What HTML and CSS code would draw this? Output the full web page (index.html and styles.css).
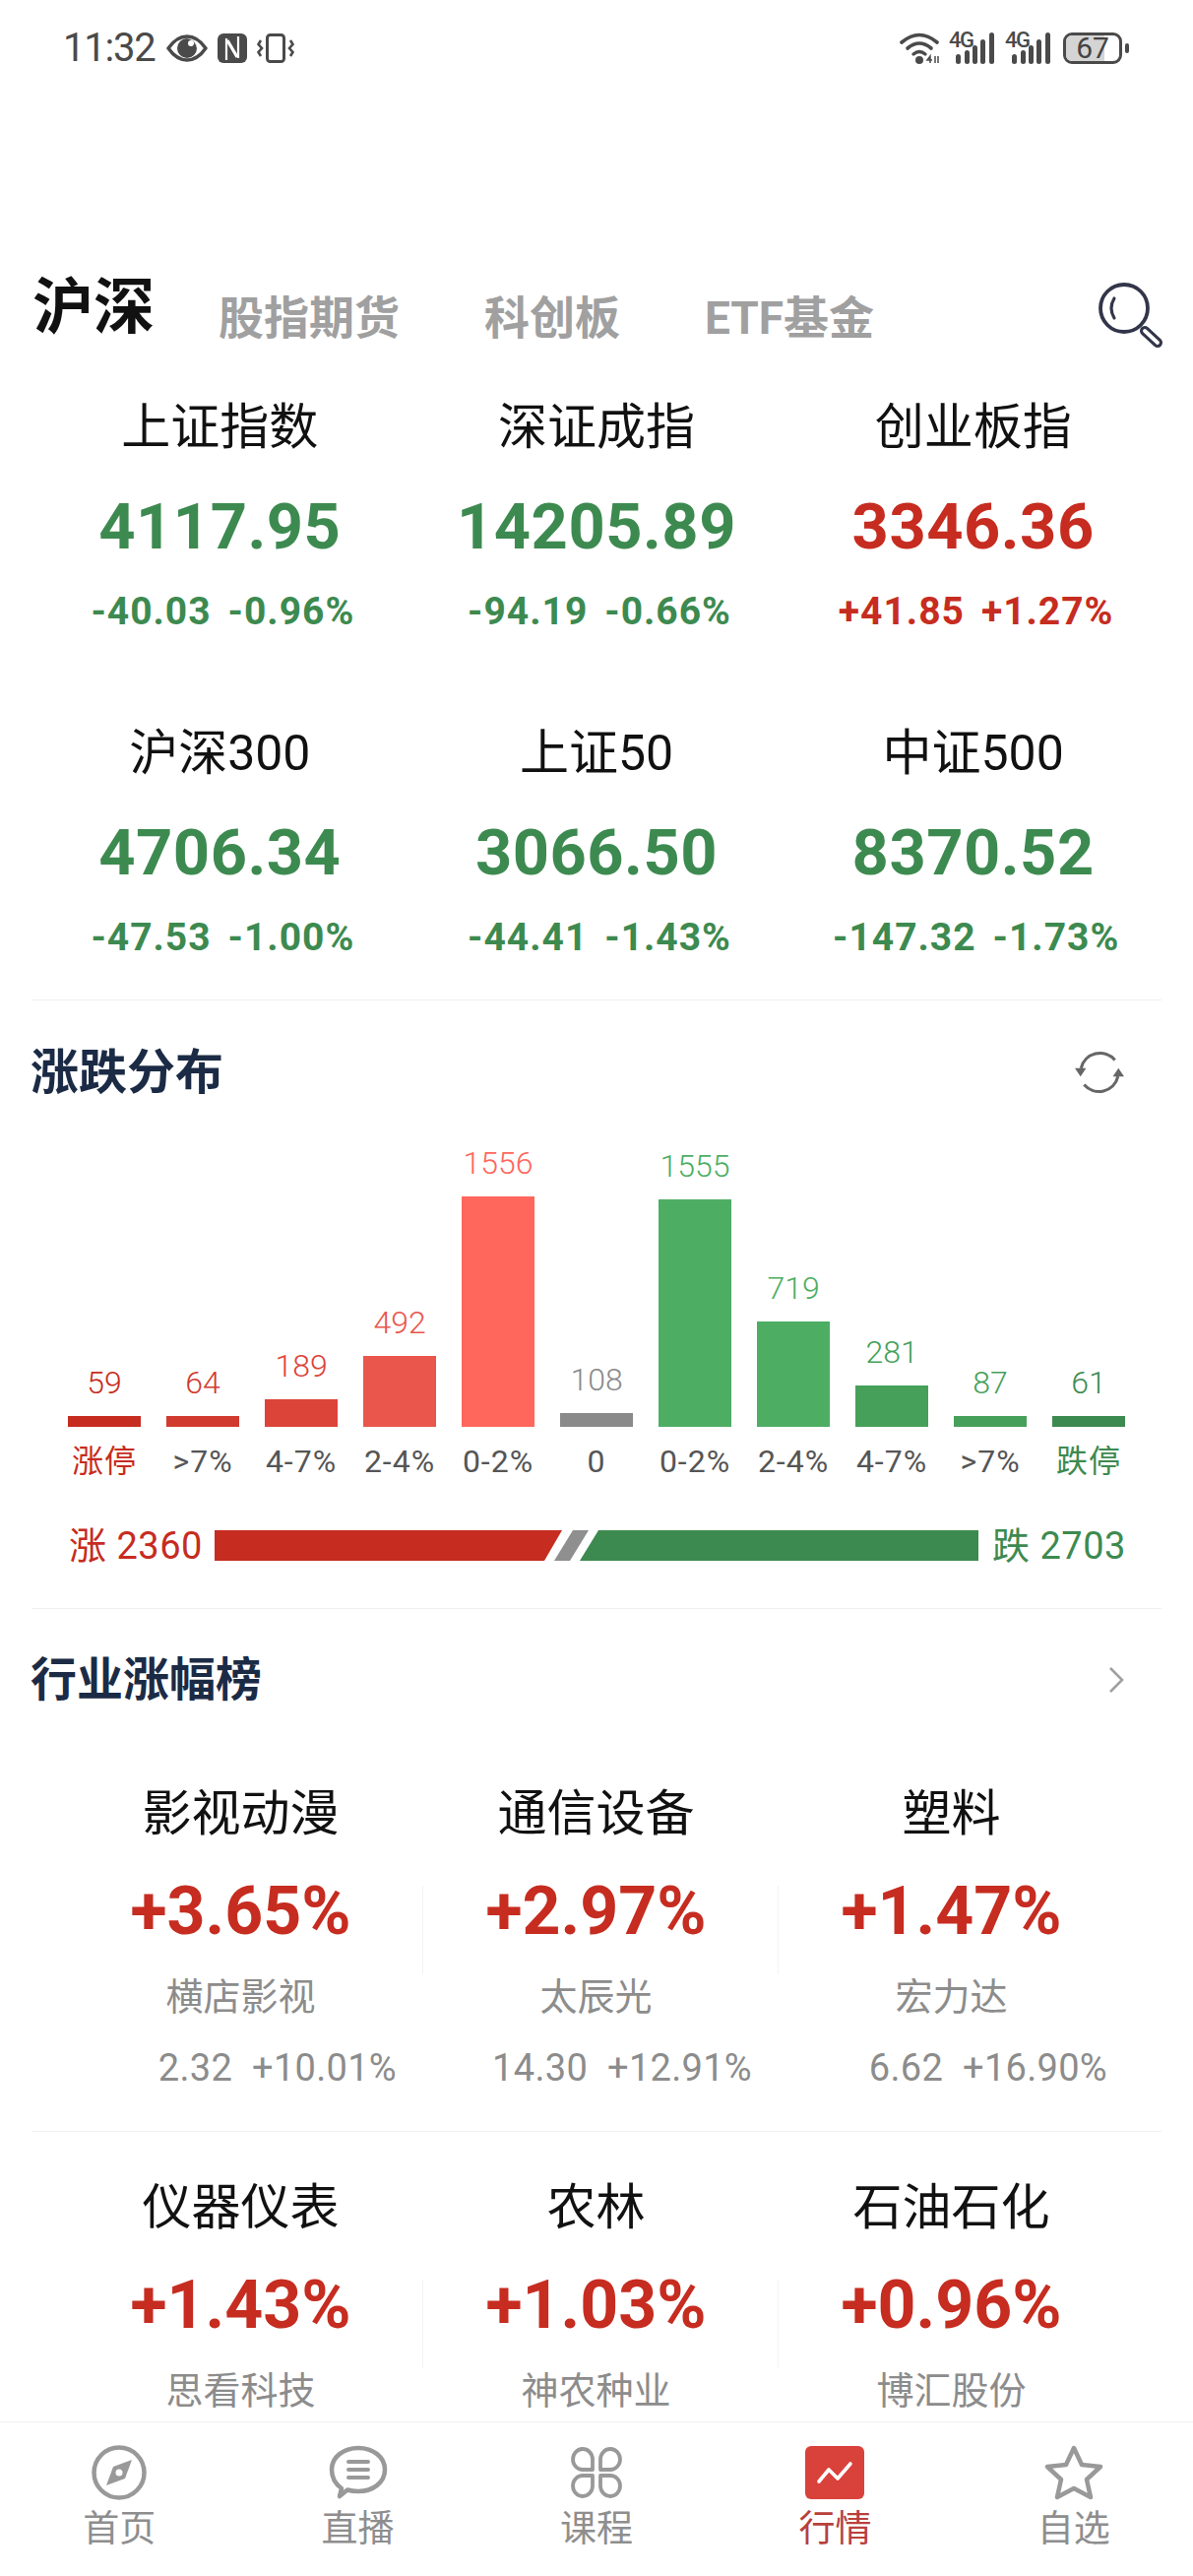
FILE: index.html
```html
<!DOCTYPE html>
<html lang="zh-CN">
<head>
<meta charset="utf-8">
<title>行情</title>
<link rel="stylesheet" href="styles.css">
</head>
<body>
<div class="page">
  <main class="main">
    <header class="status">
      <div class="status-side">
        <span class="time">11:32</span>
        <svg class="ic-eye" viewBox="0 0 42 28"><path d="M2 14 C9 4 15 2 21 2 C27 2 33 4 40 14 C33 24 27 26 21 26 C15 26 9 24 2 14 Z" fill="none" stroke="#4a4a4a" stroke-width="3.5" stroke-linejoin="round"/><circle cx="21" cy="14" r="10" fill="#4a4a4a"/><path d="M21 4 A10 10 0 0 1 31 14 A12 12 0 0 0 21 4 Z" fill="#fff"/><circle cx="25" cy="9" r="3" fill="#fff"/></svg>
        <svg class="ic-nfc" viewBox="0 0 30 30"><rect width="30" height="30" rx="6" fill="#4a4a4a"/><path d="M9 27 V5 M21 25 V3" fill="none" stroke="#fff" stroke-width="2.200"/><path d="M10 7 L20 24" fill="none" stroke="#fff" stroke-width="3.200"/></svg>
        <svg class="ic-vib" viewBox="0 0 38 30"><rect x="10.5" y="1.5" width="17" height="27" rx="3" fill="none" stroke="#4a4a4a" stroke-width="3"/><path d="M4 7 L1.5 11 L5 15 L1.5 19 L4 23" fill="none" stroke="#4a4a4a" stroke-width="2.6"/><path d="M34 7 L36.500 11 L33 15 L36.500 19 L34 23" fill="none" stroke="#4a4a4a" stroke-width="2.6"/></svg>
      </div>
      <div class="status-side">
        <svg class="ic-wifi" viewBox="0 0 42 32"><path d="M2 10 Q20 -5 38 10" fill="none" stroke="#4a4a4a" stroke-width="3.6" stroke-linecap="round"/><path d="M8 16 Q20 6 32 16" fill="none" stroke="#4a4a4a" stroke-width="3.6" stroke-linecap="round"/><path d="M14 22 Q20 17 26 22" fill="none" stroke="#4a4a4a" stroke-width="3.400" stroke-linecap="round"/><circle cx="20" cy="28" r="4" fill="#4a4a4a"/><path d="M31 31 V24 L28 28 H33 M36 24 V31 M39 24 V31" fill="none" stroke="#4a4a4a" stroke-width="1.500"/></svg>
        <div class="sim">
          <span class="sim-4g">4G</span>
          <svg class="ic-sig" viewBox="0 0 42 32"><g fill="#4a4a4a"><rect x="0" y="22" width="5" height="10" rx="2.500"/><rect x="9" y="18" width="5" height="14" rx="2.500"/><rect x="17" y="13" width="5" height="19" rx="2.500"/><rect x="25" y="7" width="5" height="25" rx="2.500"/><rect x="34" y="0" width="5" height="32" rx="2.500"/></g></svg>
        </div>
        <div class="sim">
          <span class="sim-4g">4G</span>
          <svg class="ic-sig" viewBox="0 0 42 32"><g fill="#4a4a4a"><rect x="0" y="22" width="5" height="10" rx="2.500"/><rect x="9" y="18" width="5" height="14" rx="2.500"/><rect x="17" y="13" width="5" height="19" rx="2.500"/><rect x="25" y="7" width="5" height="25" rx="2.500"/><rect x="34" y="0" width="5" height="32" rx="2.500"/></g></svg>
        </div>
        <div class="battery"><span class="battery-fill"></span><span class="battery-num">67</span></div>
        <span class="battery-nub"></span>
      </div>
    </header>

    <nav class="tabs">
      <span class="tab-main">沪深</span>
      <span class="tab">股指期货</span>
      <span class="tab">科创板</span>
      <span class="tab">ETF基金</span>
      <svg class="ic-search" viewBox="0 0 68 68"><circle cx="28" cy="27" r="24" fill="none" stroke="#33364a" stroke-width="3.800"/><path d="M18 17 Q12 27 18 37" fill="none" stroke="#33364a" stroke-width="3.200" stroke-linecap="round"/><path d="M49 50 L62 62" stroke="#33364a" stroke-width="10" stroke-linecap="round"/><path d="M49 50 L62 62" stroke="#fff" stroke-width="3.800" stroke-linecap="round"/></svg>
    </nav>

    <section class="indices">
      <div class="idx"><div class="idx-name">上证指数</div><div class="idx-val down">4117.95</div><div class="idx-sub down"><span>-40.03</span><span>-0.96%</span></div></div>
      <div class="idx"><div class="idx-name">深证成指</div><div class="idx-val down">14205.89</div><div class="idx-sub down"><span>-94.19</span><span>-0.66%</span></div></div>
      <div class="idx"><div class="idx-name">创业板指</div><div class="idx-val up">3346.36</div><div class="idx-sub up"><span>+41.85</span><span>+1.27%</span></div></div>
      <div class="idx"><div class="idx-name">沪深300</div><div class="idx-val down">4706.34</div><div class="idx-sub down"><span>-47.53</span><span>-1.00%</span></div></div>
      <div class="idx"><div class="idx-name">上证50</div><div class="idx-val down">3066.50</div><div class="idx-sub down"><span>-44.41</span><span>-1.43%</span></div></div>
      <div class="idx"><div class="idx-name">中证500</div><div class="idx-val down">8370.52</div><div class="idx-sub down"><span>-147.32</span><span>-1.73%</span></div></div>
    </section>

    <section class="dist">
      <div class="sec-head">
        <h2 class="sec-title">涨跌分布</h2>
        <svg class="ic-refresh" viewBox="0 0 48 42"><path d="M6 17 A19 19 0 0 1 39 9" fill="none" stroke="#666" stroke-width="3"/><path d="M42 25 A19 19 0 0 1 9 33" fill="none" stroke="#666" stroke-width="3"/><path d="M0 17 H11 L5.500 25 Z M37 25 H48 L42.500 17 Z" fill="#666"/></svg>
      </div>
      <div class="chart">
        <div class="col"><span class="col-val c-r1">59</span><span class="bar b-r1" style="height:11px"></span><span class="col-label c-limit-up">涨停</span></div>
        <div class="col"><span class="col-val c-r2">64</span><span class="bar b-r2" style="height:11px"></span><span class="col-label">&gt;7%</span></div>
        <div class="col"><span class="col-val c-r3">189</span><span class="bar b-r3" style="height:28px"></span><span class="col-label">4-7%</span></div>
        <div class="col"><span class="col-val c-r4">492</span><span class="bar b-r4" style="height:72px"></span><span class="col-label">2-4%</span></div>
        <div class="col"><span class="col-val c-r5">1556</span><span class="bar b-r5" style="height:234px"></span><span class="col-label">0-2%</span></div>
        <div class="col"><span class="col-val c-n">108</span><span class="bar b-n" style="height:14px"></span><span class="col-label">0</span></div>
        <div class="col"><span class="col-val c-g1">1555</span><span class="bar b-g1" style="height:231px"></span><span class="col-label">0-2%</span></div>
        <div class="col"><span class="col-val c-g1">719</span><span class="bar b-g1" style="height:107px"></span><span class="col-label">2-4%</span></div>
        <div class="col"><span class="col-val c-g2">281</span><span class="bar b-g2" style="height:42px"></span><span class="col-label">4-7%</span></div>
        <div class="col"><span class="col-val c-g2">87</span><span class="bar b-g2" style="height:11px"></span><span class="col-label">&gt;7%</span></div>
        <div class="col"><span class="col-val c-g3">61</span><span class="bar b-g3" style="height:11px"></span><span class="col-label c-limit-down">跌停</span></div>
      </div>
      <div class="summary">
        <span class="sum-text up">涨 2360</span>
        <svg class="sum-bar" viewBox="0 0 776 31"><polygon points="0,0 353,0 335,31 0,31" fill="#c62c20"/><polygon points="364,0 380,0 361,31 345,31" fill="#8f8f8f"/><polygon points="390,0 776,0 776,31 371,31" fill="#3d8a50"/></svg>
        <span class="sum-text down">跌 2703</span>
      </div>
    </section>

    <section class="rank">
      <div class="sec-head rank-head">
        <h2 class="sec-title rank-title">行业涨幅榜</h2>
        <svg class="ic-chev" viewBox="0 0 18 30"><polyline points="3,3 15,15 3,27" fill="none" stroke="#a0a0a0" stroke-width="2.600"/></svg>
      </div>
      <div class="ind-row ind-row-first">
        <div class="ind"><div class="ind-name">影视动漫</div><div class="ind-pct">+3.65%</div><div class="ind-stock">横店影视</div><div class="ind-price"><span>2.32</span><span>+10.01%</span></div></div>
        <div class="ind"><div class="ind-name">通信设备</div><div class="ind-pct">+2.97%</div><div class="ind-stock">太辰光</div><div class="ind-price"><span>14.30</span><span>+12.91%</span></div></div>
        <div class="ind"><div class="ind-name">塑料</div><div class="ind-pct">+1.47%</div><div class="ind-stock">宏力达</div><div class="ind-price"><span>6.62</span><span>+16.90%</span></div></div>
      </div>
      <div class="ind-row">
        <div class="ind"><div class="ind-name">仪器仪表</div><div class="ind-pct">+1.43%</div><div class="ind-stock">思看科技</div></div>
        <div class="ind"><div class="ind-name">农林</div><div class="ind-pct">+1.03%</div><div class="ind-stock">神农种业</div></div>
        <div class="ind"><div class="ind-name">石油石化</div><div class="ind-pct">+0.96%</div><div class="ind-stock">博汇股份</div></div>
      </div>
    </section>
  </main>

  <footer class="nav">
    <div class="nav-item">
      <svg class="nav-ic" viewBox="0 0 60 56"><circle cx="30" cy="28" r="25.500" fill="none" stroke="#999" stroke-width="4.500"/><path d="M43 15 L36 34 L17 41 L24 22 Z" fill="#999"/><circle cx="30" cy="28" r="3.500" fill="#fff"/></svg>
      <span>首页</span>
    </div>
    <div class="nav-item">
      <svg class="nav-ic" viewBox="0 0 60 56"><path d="M13 44 C6 39 3 32 3 25 C3 12 15 3 30 3 C45 3 57 12 57 25 C57 38 45 47 30 47 C26 47 22 46.500 19 45.500 L11 52 Z" fill="none" stroke="#999" stroke-width="4.500" stroke-linejoin="round"/><path d="M20 17 H40 M20 25 H40 M20 33 H40" stroke="#999" stroke-width="4" stroke-linecap="round"/></svg>
      <span>直播</span>
    </div>
    <div class="nav-item">
      <svg class="nav-ic" viewBox="0 0 60 56"><g fill="none" stroke="#999" stroke-width="3.800" stroke-linejoin="round" transform="translate(5 3)"><path d="M21 22 H11 A10 10.500 0 1 1 21 11 Z"/><path d="M29 22 H39 A10 10.500 0 1 0 29 11 Z"/><path d="M21 28 H11 A10 10.500 0 1 0 21 39 Z"/><path d="M29 28 H39 A10 10.500 0 1 1 29 39 Z"/></g></svg>
      <span>课程</span>
    </div>
    <div class="nav-item nav-on">
      <svg class="nav-ic" viewBox="0 0 60 56"><rect y="1" width="60" height="54" rx="6" fill="#d9413b"/><polyline points="14,37 24,25 33,34 46,19" fill="none" stroke="#fff" stroke-width="3.600" stroke-linecap="round" stroke-linejoin="round"/></svg>
      <span>行情</span>
    </div>
    <div class="nav-item">
      <svg class="nav-ic" viewBox="0 0 60 56"><polygon points="30,3 38,20 57,22 43,35 47,53 30,44 13,53 17,35 3,22 22,20" fill="none" stroke="#999" stroke-width="4.500" stroke-linejoin="round"/></svg>
      <span>自选</span>
    </div>
  </footer>
</div>
</body>
</html>
```

FILE: styles.css
```css
* { box-sizing: border-box; }
html, body { margin: 0; padding: 0; background: #fff; }
body { font-family: Roboto, "Noto Sans CJK SC", sans-serif; color: #111; }
.page { width: 1212px; height: 2616px; display: flex; flex-direction: column; overflow: hidden; background: #fff; }
.main { flex: 1 1 0; min-height: 0; overflow: hidden; }

.up { color: #c62c20; }
.down { color: #3d8a50; }

/* status bar */
.status { height: 98px; padding: 0 66px 0 64px; display: flex; justify-content: space-between; align-items: center; }
.status-side { display: flex; align-items: center; }
.time { font-size: 40px; line-height: 48px; color: #4a4a4a; letter-spacing: -1.2px; margin-right: 11px; }
.ic-eye { width: 42px; height: 28px; margin-right: 10px; }
.ic-nfc { width: 30px; height: 30px; margin-right: 10px; }
.ic-vib { width: 38px; height: 30px; }
.ic-wifi { width: 42px; height: 32px; margin-right: 8px; }
.sim { position: relative; width: 44px; height: 32px; margin-right: 13px; }
.sim:last-of-type { margin-right: 12px; }
.sim-4g { position: absolute; left: 0; top: -2px; font-size: 22px; line-height: 20px; color: #4a4a4a; font-weight: 500; letter-spacing: -1.4px; }
.ic-sig { position: absolute; left: 7px; top: 0; width: 42px; height: 32px; }
.battery { position: relative; width: 60px; height: 32px; border: 3px solid #4a4a4a; border-radius: 9px; margin-left: 2px; display: flex; align-items: center; justify-content: center; }
.battery-fill { position: absolute; left: 0; top: 0; bottom: 0; width: 39px; background: #d4d4d4; border-radius: 6px 0 0 6px; }
.battery-num { position: relative; font-size: 30px; line-height: 26px; color: #444; }
.battery-nub { width: 4px; height: 10px; border-radius: 2px; background: #4a4a4a; margin-left: 3px; margin-right: -1px; }

/* tabs */
.tabs { margin-top: 170px; height: 104px; padding: 0 30px 0 33px; display: flex; align-items: center; }
.tab-main { font-size: 62px; line-height: 70px; font-weight: 700; color: #111; margin-right: 65px; margin-bottom: 14px; }
.tab { font-size: 46px; line-height: 60px; font-weight: 700; color: #a0a0a0; margin-right: 86px; margin-top: 5px; }
.tab:nth-of-type(4) { margin-right: 0; }
.ic-search { width: 68px; height: 68px; margin-left: auto; }

/* indices */
.indices { margin: 32px 32px 0; padding-bottom: 38px; border-bottom: 1px solid #f0f0f0; display: grid; grid-template-columns: repeat(3, 1fr); row-gap: 89px; text-align: center; }
.idx-name { font-size: 50px; line-height: 60px; color: #111; }
.idx-val { margin-top: 31px; font-size: 65px; line-height: 80px; font-weight: 700; letter-spacing: .5px; }
.idx-sub { margin-top: 21px; padding-left: 6px; font-size: 39px; line-height: 50px; font-weight: 700; display: flex; justify-content: center; gap: 17px; letter-spacing: 1px; }

/* section heads */
.sec-head { margin: 0 32px; height: 60px; display: flex; align-items: center; justify-content: space-between; }
.sec-title { margin: 0 0 0 -1px; font-size: 49px; line-height: 60px; font-weight: 700; color: #1c2b45; }
.rank-title { font-size: 47px; }
.dist .sec-head { margin-top: 44px; padding-right: 38px; }
.ic-refresh { width: 50px; height: 44px; margin-bottom: 2px; }

/* chart */
.chart { margin: 25px 56px 0; display: grid; grid-template-columns: repeat(11, 100px); align-items: end; height: 359px; }
.col { display: flex; flex-direction: column; align-items: center; }
.col-val { font-size: 32px; line-height: 40px; margin-bottom: 14px; font-weight: 300; }
.bar { display: block; width: 74px; }
.col-label { margin-top: 15px; font-size: 32px; line-height: 40px; color: #555; letter-spacing: 1px; }
.c-limit-up { color: #c62c20; }
.c-limit-down { color: #3d8a50; }
.c-r1 { color: #c62c20; } .b-r1 { background: #c62c20; }
.c-r2 { color: #d13b2f; } .b-r2 { background: #d13b2f; }
.c-r3 { color: #dc4339; } .b-r3 { background: #dc4339; }
.c-r4 { color: #ea564c; } .b-r4 { background: #ea564c; }
.c-r5 { color: #ff665c; } .b-r5 { background: #ff665c; }
.c-n { color: #8a8a8a; } .b-n { background: #8a8a8a; }
.c-g1 { color: #4dae63; } .b-g1 { background: #4dae63; }
.c-g2 { color: #46a05a; } .b-g2 { background: #46a05a; }
.c-g3 { color: #3d8a50; } .b-g3 { background: #3d8a50; }

/* summary */
.dist { margin: 0; }
.summary { margin: 39px 32px 0; padding: 0 38px 38px; border-bottom: 1px solid #f0f0f0; display: flex; align-items: center; gap: 14px; }
.sum-text { font-size: 38px; line-height: 50px; white-space: nowrap; width: 134px; letter-spacing: .5px; margin-top: 2px; }
.sum-bar { flex: 0 0 776px; width: 776px; height: 31px; }

/* rank */
.rank-head { margin-top: 42px; padding-right: 37px; }
.ic-chev { width: 18px; height: 30px; }
.ind-row { margin: 0 32px; padding: 76px 0 39px 32px; display: grid; grid-template-columns: repeat(3, 361px); text-align: center; }
.ind-row-first { border-bottom: 1px solid #f0f0f0; }
.ind-row + .ind-row { padding-top: 47px; }
.ind { position: relative; }
.ind:nth-child(-n+2)::after { content: ""; position: absolute; right: -5px; top: 103px; height: 90px; width: 1px; background: #f3f3f3; }
.ind-name { font-size: 50px; line-height: 60px; color: #111; }
.ind-pct { margin-top: 27px; font-size: 68px; line-height: 84px; font-weight: 700; color: #c62c20; }
.ind-stock { margin-top: 20px; font-size: 38px; line-height: 50px; color: #8c8c8c; }
.ind-price { margin-top: 22px; padding-right: 22px; font-size: 38px; line-height: 50px; color: #8c8c8c; display: flex; justify-content: flex-end; gap: 20px; letter-spacing: .3px; }

/* nav */
.nav { flex: 0 0 157px; border-top: 1px solid #f0f0f0; padding-top: 23px; display: flex; }
.nav-item { flex: 1; display: flex; flex-direction: column; align-items: center; font-size: 37px; line-height: 44px; color: #8e8e8e; }
.nav-ic { width: 60px; height: 56px; margin-bottom: 8px; }
.nav-on span { color: #b8403b; }
```
